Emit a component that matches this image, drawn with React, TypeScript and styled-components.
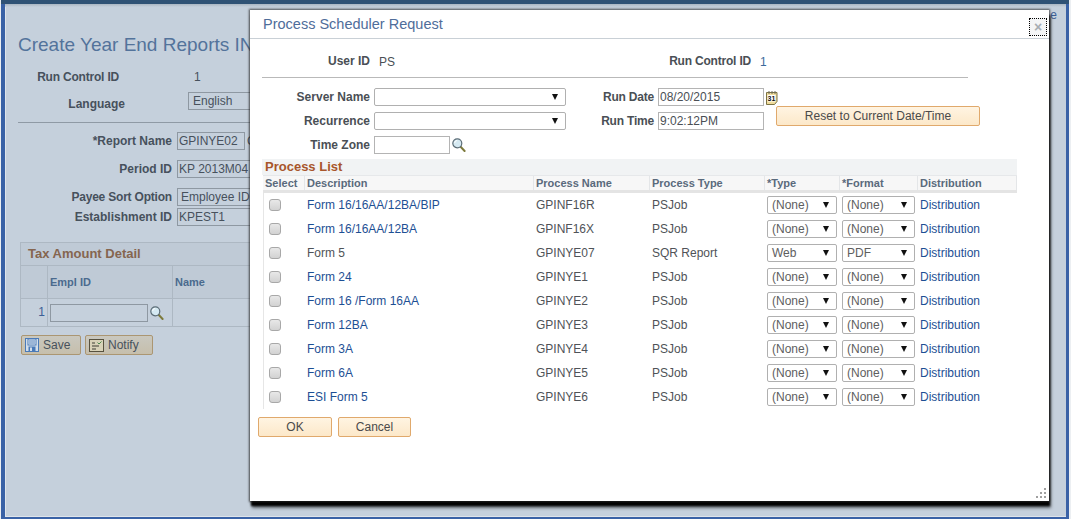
import React from "react";
import styled, { createGlobalStyle } from "styled-components";

const Global = createGlobalStyle`
  html, body { margin: 0; padding: 0; background: #fff; }
  * { box-sizing: border-box; }
  body { font-family: "Liberation Sans", Arial, sans-serif; font-size: 12px; }
`;

const Shell = styled.div`
  position: relative;
  width: 1071px;
  height: 519px;
  overflow: hidden;
  background: #eceff2;
  padding: 0 2px 0 1px;
`;
const Frame = styled.div`
  height: 519px;
  border-left: 4px solid #3a62a6;
  border-right: 3px solid #3a62a6;
  border-bottom: 2px solid #3a62a6;
  background: #c5d0dc;
  box-shadow: inset 1px -1px 0 #dfe4ea;
`;
const TopBar = styled.div`
  height: 4px;
  margin-left: -4px;
  margin-right: -3px;
  background: #2f5275;
`;
const TopEdge = styled.div`
  height: 3px;
  background: linear-gradient(#aab6c2, #c5d0dc);
`;
const Backdrop = styled.main`
  position: relative;
  padding: 0 0 0 13px;
`;
const PageLink = styled.a`
  display: block;
  text-align: right;
  padding-right: 9px;
  margin-top: 1px;
  height: 14px;
  line-height: 14px;
  color: #3c5f96;
`;
const PageTitle = styled.h1`
  margin: 12px 0 0;
  height: 22px;
  line-height: 22px;
  font-size: 19px;
  font-weight: 400;
  color: #53739b;
  white-space: nowrap;
`;
const PageRow = styled.div<{ $top: number; $label: number }>`
  display: flex;
  align-items: center;
  height: 18px;
  margin-top: ${(p) => p.$top}px;
  & > label { width: ${(p) => p.$label}px; text-align: right; flex: none; }
`;
const PageLabel = styled.label<{ $tight?: boolean }>`
  font-weight: 700;
  color: #47515c;
  white-space: nowrap;
  letter-spacing: ${(p) => (p.$tight ? "-0.2px" : "0")};
`;
const PageValue = styled.span`
  color: #47515c;
  margin-left: 75px;
`;
const PageField = styled.div<{ $w: number; $ml: number; $pad?: number; $raise?: number }>`
  width: ${(p) => p.$w}px;
  margin-left: ${(p) => p.$ml}px;
  margin-bottom: ${(p) => p.$raise ?? 0}px;
  height: 18px;
  border: 1px solid #8e98a2;
  padding-left: ${(p) => p.$pad ?? 1}px;
  line-height: 16px;
  color: #47515c;
  white-space: nowrap;
  overflow: hidden;
  flex: none;
`;
const PageRule = styled.hr`
  margin: 9px 0 0;
  border: 0;
  border-top: 1px solid #8f9aa5;
  width: 240px;
`;
const Fragment = styled.span`
  margin-left: 2px;
  color: #47515c;
`;
const GridBox = styled.section`
  margin: 16px 0 0 2px;
  width: 240px;
  border-top: 1px solid #adb8c3;
  border-left: 1px solid #adb8c3;
`;
const GridTitle = styled.div`
  height: 23px;
  line-height: 22px;
  padding-left: 7px;
  font-size: 13px;
  font-weight: 700;
  color: #85654f;
  background: #bfcad6;
  border-bottom: 1px solid #adb8c3;
`;
const GridHead = styled.div`
  display: grid;
  grid-template-columns: 27px 125px 1fr;
  height: 33px;
  background: #bfcad6;
  border-bottom: 1px solid #adb8c3;
  & > span { border-right: 1px solid #adb8c3; padding-left: 2px; line-height: 33px; font-size: 11px; font-weight: 700; color: #4b6a8e; }
`;
const GridRow = styled.div`
  display: grid;
  grid-template-columns: 27px 125px 1fr;
  height: 28px;
  border-bottom: 1px solid #adb8c3;
  align-items: stretch;
`;
const GridNum = styled.span`
  border-right: 1px solid #adb8c3;
  text-align: right;
  padding-right: 2px;
  line-height: 27px;
  color: #3c5f96;
`;
const GridCell = styled.span`
  display: flex;
  align-items: center;
  padding-left: 2px;
  gap: 2px;
  border-right: 1px solid #adb8c3;
`;
const GridInput = styled.div`
  width: 98px;
  height: 18px;
  border: 1px solid #8e98a2;
`;
const PageButtons = styled.div`
  display: flex;
  gap: 4px;
  margin: 8px 0 0 3px;
`;
const PageButton = styled.button<{ $w: number }>`
  display: flex;
  align-items: center;
  gap: 4px;
  width: ${(p) => p.$w}px;
  height: 20px;
  padding: 0 0 0 3px;
  font: 12px "Liberation Sans", Arial, sans-serif;
  color: #47515c;
  background: linear-gradient(#c9c8bf, #c6bfac);
  border: 1px solid #ab9672;
  border-radius: 2px;
`;

const Modal = styled.section`
  position: absolute;
  left: 250px;
  top: 10px;
  width: 799px;
  height: 491px;
  background: #fff;
  box-shadow: 0 0 2px 1px rgba(40, 40, 40, 0.75), 1px 5px 2px #000, 2px 7px 3px rgba(0, 0, 0, 0.5);
`;
const TitleBar = styled.header`
  display: flex;
  align-items: center;
  justify-content: space-between;
  height: 29px;
  padding: 0 2px 0 13px;
  border-bottom: 1px solid #c9d0d6;
`;
const Title = styled.h2`
  margin: 0;
  font-size: 14.5px;
  font-weight: 400;
  color: #4f6d9a;
`;
const Close = styled.button`
  width: 18px;
  height: 18px;
  margin-top: 6px;
  padding: 0;
  border: 1px dotted #000;
  background: #f4f5f6;
  color: #a7adb3;
  font: 700 14px/15px "Liberation Sans", Arial, sans-serif;
`;
const InfoRow = styled.div`
  display: flex;
  height: 39px;
  margin: 0 81px 0 12px;
  padding-top: 15px;
  border-bottom: 1px solid #b9b9b9;
`;
const InfoLabel = styled.span<{ $w: number; $tight?: boolean }>`
  width: ${(p) => p.$w}px;
  text-align: right;
  font-weight: 700;
  color: #4a4f55;
  flex: none;
  letter-spacing: ${(p) => (p.$tight ? "-0.2px" : "0")};
`;
const InfoValue = styled.span<{ $w: number; $blue?: boolean }>`
  width: ${(p) => p.$w}px;
  padding-left: 9px;
  margin-top: 1px;
  color: ${(p) => (p.$blue ? "#3c6a9c" : "#4a4f55")};
  flex: none;
`;
const FormArea = styled.div`
  display: flex;
  height: 81px;
  padding-top: 10px;
`;
const FormCol = styled.div<{ $label: number; $w: number }>`
  display: flex;
  flex-direction: column;
  gap: 6px;
  width: ${(p) => p.$w}px;
  flex: none;
  & label { width: ${(p) => p.$label}px; }
`;
const FormRow = styled.div`
  display: flex;
  align-items: center;
  gap: 4px;
  height: 18px;
`;
const FormLabel = styled.label<{ $tight?: boolean }>`
  text-align: right;
  font-weight: 700;
  color: #4a4f55;
  flex: none;
  white-space: nowrap;
  letter-spacing: ${(p) => (p.$tight ? "-0.2px" : "0")};
`;
const TextBox = styled.div<{ $w: number }>`
  width: ${(p) => p.$w}px;
  height: 18px;
  border: 1px solid #b4b4b4;
  padding-left: 1px;
  line-height: 16px;
  color: #4a4f55;
  flex: none;
`;
const Drop = styled.div<{ $w: number; $h?: number }>`
  display: flex;
  align-items: center;
  width: ${(p) => p.$w}px;
  height: ${(p) => p.$h ?? 18}px;
  padding: 0 7px 0 4px;
  border: 1px solid #b0b0b0;
  border-radius: 2px;
  color: #5e5e5e;
  background: #fff;
  flex: none;
  &::after {
    content: "";
    margin-left: auto;
    border-left: 3.5px solid transparent;
    border-right: 3.5px solid transparent;
    border-top: 6px solid #111;
  }
`;
const GlassSlot = styled.span`
  display: flex;
  margin-left: -2px;
`;
const ActionCol = styled.div`
  display: flex;
  flex-direction: column;
  align-items: flex-start;
`;
const CalendarWrap = styled.div`
  height: 18px;
  padding-top: 3px;
  margin-left: 2px;
`;
const OrangeButton = styled.button<{ $w: number }>`
  width: ${(p) => p.$w}px;
  height: 20px;
  padding: 0;
  font: 12px "Liberation Sans", Arial, sans-serif;
  color: #4a4a4a;
  background: linear-gradient(#fff4e2, #fce8c9);
  border: 1px solid #e0a96c;
  border-radius: 2px;
`;
const ResetButton = styled(OrangeButton)`
  margin-left: 12px;
`;
const ListHeading = styled.div`
  margin-left: 12px;
  width: 755px;
  height: 16px;
  line-height: 15px;
  padding-left: 3px;
  font-size: 13px;
  font-weight: 700;
  color: #a8562b;
  background: #f1f3f4;
`;
const Table = styled.div`
  margin-left: 13px;
  width: 754px;
`;
const columns = "42px 229px 116px 115px 75px 78px 99px";
const HeadRow = styled.div`
  display: grid;
  grid-template-columns: ${columns};
  height: 18px;
  border-top: 1px solid #e6e8ea;
  border-bottom: 3px solid #e4e4e4;
  background: #f7f7f7;
`;
const HeadCell = styled.div`
  padding-left: 2px;
  line-height: 14px;
  font-size: 11px;
  font-weight: 700;
  color: #5a6a7c;
  border-right: 1px solid #e4e6e8;
  white-space: nowrap;
`;
const Rows = styled.div`
  border-left: 1px solid #e6e6e6;
  height: 216px;
  width: 42px;
  position: absolute;
  pointer-events: none;
`;
const Row = styled.div`
  display: grid;
  grid-template-columns: ${columns};
  height: 24px;
  align-items: center;
`;
const Check = styled.span`
  display: block;
  width: 12px;
  height: 12px;
  margin-left: 6px;
  border: 1px solid #a8a8a8;
  border-radius: 3px;
  background: linear-gradient(#e8e8e8, #d2d2d2);
`;
const Cell = styled.span`
  padding-left: 2px;
  color: #4f5358;
  white-space: nowrap;
`;
const Link = styled(Cell).attrs({ as: "a" })`
  color: #1d4f94;
`;
const DropCell = styled.div`
  padding-left: 2px;
`;
const Footer = styled.div`
  display: flex;
  gap: 6px;
  margin: 8px 0 0 8px;
`;
const Resize = styled.svg`
  position: absolute;
  right: 1px;
  bottom: 1px;
`;

const Glass = () => (
  <svg width="14" height="14" viewBox="0 0 14 14" aria-hidden>
    <path d="M8.6 8.800 12.600 13" stroke="#7d7a3c" strokeWidth="2" strokeLinecap="round" />
    <circle cx="5.300" cy="5.300" r="4.500" fill="#d5e9f2" stroke="#5b6c76" strokeWidth="1.200" />
    <path d="M2.600 5a3 3 0 0 1 2.600-2.600" stroke="#fff" strokeWidth="1" fill="none" />
  </svg>
);
const Calendar = () => (
  <svg width="12" height="14" viewBox="0 0 12 14" aria-hidden>
    <path d="M.5 1.500h10.500v9l-2.500 3H.5z" fill="#efdc9c" stroke="#7c7344" />
    <path d="M3 0v3M6 0v3M9 0v3" stroke="#6c6c5c" />
    <rect x="1.500" y="4" width="8" height="6.500" fill="#fff" />
    <text x="5.500" y="10" textAnchor="middle" fontSize="7" fontWeight="700" fontFamily="Liberation Sans" fill="#111">31</text>
  </svg>
);
const Floppy = () => (
  <svg width="14" height="14" viewBox="0 0 14 14" aria-hidden>
    <rect x=".5" y=".5" width="13" height="13" fill="#d3deea" stroke="#4a7ab8" />
    <rect x="3" y="1" width="8" height="6" fill="#eef2f6" stroke="#4a7ab8" />
    <path d="M4 3h6M4 5h6" stroke="#4a7ab8" />
    <rect x="3.500" y="8.500" width="7" height="5" fill="#4a7ab8" />
    <rect x="5" y="9.500" width="2" height="3.500" fill="#d3deea" />
  </svg>
);
const Note = () => (
  <svg width="15" height="13" viewBox="0 0 15 13" aria-hidden>
    <rect x=".5" y=".5" width="14" height="12" fill="#d8d2b8" stroke="#57513e" />
    <path d="M3 4h3M3 7h7M3 10h4" stroke="#3f3f35" />
    <path d="M8.500 3.500l1.500 1.500L12.500 2.500" stroke="#4d8a4d" fill="none" />
  </svg>
);

const processes = [
  { d: "Form 16/16AA/12BA/BIP", n: "GPINF16R", t: "PSJob", link: true },
  { d: "Form 16/16AA/12BA", n: "GPINF16X", t: "PSJob", link: true },
  { d: "Form 5", n: "GPINYE07", t: "SQR Report", link: false, ty: "Web", f: "PDF" },
  { d: "Form 24", n: "GPINYE1", t: "PSJob", link: true },
  { d: "Form 16 /Form 16AA", n: "GPINYE2", t: "PSJob", link: true },
  { d: "Form 12BA", n: "GPINYE3", t: "PSJob", link: true },
  { d: "Form 3A", n: "GPINYE4", t: "PSJob", link: true },
  { d: "Form 6A", n: "GPINYE5", t: "PSJob", link: true },
  { d: "ESI Form 5", n: "GPINYE6", t: "PSJob", link: true },
];

export default function App() {
  return (
    <Shell>
      <Global />
      <Frame>
        <TopBar />
        <TopEdge />
        <Backdrop>
          <PageLink>e</PageLink>
          <PageTitle>Create Year End Reports IN</PageTitle>
          <PageRow $top={12} $label={101}>
            <PageLabel $tight>Run Control ID</PageLabel>
            <PageValue>1</PageValue>
          </PageRow>
          <PageRow $top={9} $label={107}>
            <PageLabel>Language</PageLabel>
            <PageField $w={70} $ml={63} $pad={4} $raise={6}>English</PageField>
          </PageRow>
          <PageRule />
          <PageRow $top={9} $label={154}>
            <PageLabel>*Report Name</PageLabel>
            <PageField $w={68} $ml={5}>GPINYE02</PageField>
            <Fragment>G</Fragment>
          </PageRow>
          <PageRow $top={10} $label={154}>
            <PageLabel>Period ID</PageLabel>
            <PageField $w={80} $ml={5}>KP 2013M04</PageField>
          </PageRow>
          <PageRow $top={10} $label={154}>
            <PageLabel $tight>Payee Sort Option</PageLabel>
            <PageField $w={80} $ml={5} $pad={3}>Employee ID</PageField>
          </PageRow>
          <PageRow $top={2} $label={154}>
            <PageLabel>Establishment ID</PageLabel>
            <PageField $w={80} $ml={5}>KPEST1</PageField>
          </PageRow>
          <GridBox>
            <GridTitle>Tax Amount Detail</GridTitle>
            <GridHead>
              <span />
              <span>Empl ID</span>
              <span>Name</span>
            </GridHead>
            <GridRow>
              <GridNum>1</GridNum>
              <GridCell>
                <GridInput />
                <Glass />
              </GridCell>
              <span />
            </GridRow>
          </GridBox>
          <PageButtons>
            <PageButton $w={60}><Floppy />Save</PageButton>
            <PageButton $w={68}><Note />Notify</PageButton>
          </PageButtons>
        </Backdrop>
      </Frame>

      <Modal>
        <TitleBar>
          <Title>Process Scheduler Request</Title>
          <Close aria-label="Close">×</Close>
        </TitleBar>
        <InfoRow>
          <InfoLabel $w={108}>User ID</InfoLabel>
          <InfoValue $w={272}>PS</InfoValue>
          <InfoLabel $w={109} $tight>Run Control ID</InfoLabel>
          <InfoValue $w={30} $blue>1</InfoValue>
        </InfoRow>
        <FormArea>
          <FormCol $label={120} $w={316}>
            <FormRow><FormLabel>Server Name</FormLabel><Drop $w={192} /></FormRow>
            <FormRow><FormLabel>Recurrence</FormLabel><Drop $w={192} /></FormRow>
            <FormRow>
              <FormLabel>Time Zone</FormLabel>
              <TextBox $w={76} />
              <GlassSlot><Glass /></GlassSlot>
            </FormRow>
          </FormCol>
          <FormCol $label={88} $w={198}>
            <FormRow><FormLabel $tight>Run Date</FormLabel><TextBox $w={106}>08/20/2015</TextBox></FormRow>
            <FormRow><FormLabel $tight>Run Time</FormLabel><TextBox $w={106}>9:02:12PM</TextBox></FormRow>
          </FormCol>
          <ActionCol>
            <CalendarWrap><Calendar /></CalendarWrap>
            <ResetButton $w={204}>Reset to Current Date/Time</ResetButton>
          </ActionCol>
        </FormArea>
        <ListHeading>Process List</ListHeading>
        <Table>
          <HeadRow>
            <HeadCell>Select</HeadCell>
            <HeadCell>Description</HeadCell>
            <HeadCell>Process Name</HeadCell>
            <HeadCell>Process Type</HeadCell>
            <HeadCell>*Type</HeadCell>
            <HeadCell>*Format</HeadCell>
            <HeadCell>Distribution</HeadCell>
          </HeadRow>
          <Rows />
          {processes.map((p) => (
            <Row key={p.n}>
              <Check />
              {p.link ? <Link>{p.d}</Link> : <Cell>{p.d}</Cell>}
              <Cell>{p.n}</Cell>
              <Cell>{p.t}</Cell>
              <DropCell><Drop $w={70}>{p.ty ?? "(None)"}</Drop></DropCell>
              <DropCell><Drop $w={73}>{p.f ?? "(None)"}</Drop></DropCell>
              <Link>Distribution</Link>
            </Row>
          ))}
        </Table>
        <Footer>
          <OrangeButton $w={74}>OK</OrangeButton>
          <OrangeButton $w={73}>Cancel</OrangeButton>
        </Footer>
        <Resize width="12" height="12" viewBox="0 0 12 12" aria-hidden>
          <path d="M8 0h2v2H8zM4 4h2v2H4zM8 4h2v2H8zM0 8h2v2H0zM4 8h2v2H4zM8 8h2v2H8z" fill="#a0a0a0" />
        </Resize>
      </Modal>
    </Shell>
  );
}
